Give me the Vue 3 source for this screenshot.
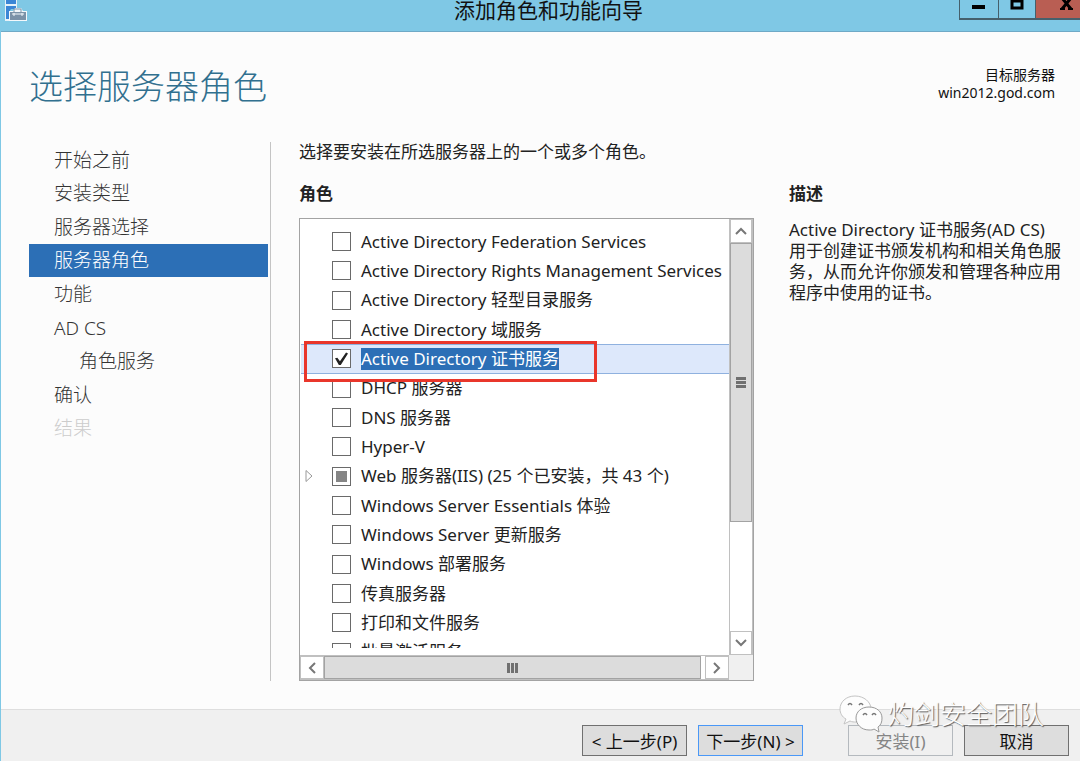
<template>
  <div class="window">
    <header class="titlebar">
      <svg class="app-icon" width="24" height="22" viewBox="0 0 24 22">
        <path d="M0 0h12v9H4v12H0z" fill="#e6f1f8" />
        <path d="M1 0h10v4H1zM1 6h10v3H6l-2 3v7H1z" fill="#3b86d6" />
        <path d="M4 11h4l2-3h6l2 3h4v10H4z" fill="#f4f8fb" />
        <path d="M5 12h16v8H5z" fill="#7b92a8" />
        <path d="M9 12V9h7v3" fill="none" stroke="#7b92a8" stroke-width="1" />
        <path d="M7 14h12M9 13v3M17 13v3" fill="none" stroke="#f4f8fb" stroke-width="1" />
      </svg>
      <h1 class="title">添加角色和功能向导</h1>
      <div class="window-controls">
        <button type="button" class="control" aria-label="最小化">
          <svg width="38" height="18" viewBox="0 0 38 18"><path d="M12 5h13v4H12z" fill="#000" /></svg>
        </button>
        <button type="button" class="control" aria-label="最大化">
          <svg width="36" height="18" viewBox="0 0 36 18"><path d="M13 1h10v7H13z" fill="none" stroke="#000" stroke-width="3" /></svg>
        </button>
        <button type="button" class="control close" aria-label="关闭">
          <svg width="44" height="18" viewBox="0 0 44 18">
            <path d="M26 -2L35 9M35 -2L26 9" stroke="#000" stroke-width="3" />
            <path d="M24 9h5M32 9h5" stroke="#000" stroke-width="2" />
          </svg>
        </button>
      </div>
    </header>

    <main class="wizard">
      <div class="page-header">
        <h2>选择服务器角色</h2>
        <p class="target">目标服务器<br />win2012.god.com</p>
      </div>

      <div class="columns">
        <nav class="steps">
          <div class="step-list">
            <a
              v-for="step in steps"
              :key="step.label"
              href="#"
              class="step"
              :class="{ current: step.current, child: step.child, disabled: step.disabled }"
              @click.prevent
            >{{ step.label }}</a>
          </div>
        </nav>

        <section class="roles">
          <p class="hint">选择要安装在所选服务器上的一个或多个角色。</p>
          <h3>角色</h3>
          <div class="list-box">
            <div class="viewport">
              <ul class="role-list">
                <li
                  v-for="(role, i) in roles"
                  :key="role.label"
                  class="role"
                  :class="{ selected: role.selected }"
                >
                  <button v-if="role.expandable" type="button" class="expander" aria-label="展开">
                    <svg width="9" height="14" viewBox="0 0 9 14"><path d="M1 1.5v11l6-5.500z" fill="#fff" stroke="#999" /></svg>
                  </button>
                  <input
                    :id="'role-' + i"
                    v-model="role.checked"
                    type="checkbox"
                    :indeterminate.prop="!!role.partial"
                  />
                  <label :for="'role-' + i">{{ role.label }}</label>
                  <span v-if="role.selected" class="marker"></span>
                </li>
              </ul>
            </div>

            <div class="scrollbar vertical">
              <button type="button" aria-label="向上滚动">
                <svg width="12" height="8" viewBox="0 0 12 8"><path d="M1 7l5-5 5 5" /></svg>
              </button>
              <div class="track"><div class="thumb"><i></i><i></i><i></i></div></div>
              <button type="button" aria-label="向下滚动">
                <svg width="12" height="8" viewBox="0 0 12 8"><path d="M1 1l5 5 5-5" /></svg>
              </button>
            </div>
            <div class="scrollbar horizontal">
              <button type="button" aria-label="向左滚动">
                <svg width="8" height="12" viewBox="0 0 8 12"><path d="M7 1L2 6l5 5" /></svg>
              </button>
              <div class="track"><div class="thumb"><i></i><i></i><i></i></div></div>
              <button type="button" aria-label="向右滚动">
                <svg width="8" height="12" viewBox="0 0 8 12"><path d="M1 1l5 5-5 5" /></svg>
              </button>
            </div>
            <div class="corner"></div>
          </div>
        </section>

        <aside class="description">
          <h3>描述</h3>
          <p>Active Directory 证书服务(AD CS) 用于创建证书颁发机构和相关角色服务，从而允许你颁发和管理各种应用程序中使用的证书。</p>
        </aside>
      </div>
    </main>

    <footer class="actions">
      <button type="button">&lt; 上一步(P)</button>
      <button type="button" class="primary">下一步(N) &gt;</button>
      <button type="button" class="install" disabled>安装(I)</button>
      <button type="button">取消</button>
    </footer>

    <div class="watermark">
      <svg width="44" height="38" viewBox="0 0 44 38">
        <g fill="#fdfdfd" stroke="#c4c4c4" stroke-width="1">
          <path d="M16 1C7 1 1 7 1 14c0 4 2 8 6 10l-2 5 6-3c2 1 4 1 6 1 9 0 15-6 15-13S25 1 16 1z" />
          <path d="M30 12c-8 0-13 5-13 11s5 12 13 12c2 0 4 0 5-1l5 3-1-5c3-2 4-5 4-9 0-6-5-11-13-11z" stroke="#999" />
        </g>
        <g fill="none" stroke="#777" stroke-width="1.500">
          <path d="M9 10q2-3 4 0M20 10q2-3 4 0M24 20q2-3 4 0M33 20q2-3 4 0" />
        </g>
      </svg>
      <span>灼剑安全团队</span>
    </div>
  </div>
</template>

<script setup>
import { ref } from 'vue';

const steps = [
  { label: '开始之前' },
  { label: '安装类型' },
  { label: '服务器选择' },
  { label: '服务器角色', current: true },
  { label: '功能' },
  { label: 'AD CS' },
  { label: '角色服务', child: true },
  { label: '确认' },
  { label: '结果', disabled: true },
];

const roles = ref([
  { label: 'Active Directory Federation Services' },
  { label: 'Active Directory Rights Management Services' },
  { label: 'Active Directory 轻型目录服务' },
  { label: 'Active Directory 域服务' },
  { label: 'Active Directory 证书服务', checked: true, selected: true },
  { label: 'DHCP 服务器' },
  { label: 'DNS 服务器' },
  { label: 'Hyper-V' },
  { label: 'Web 服务器(IIS) (25 个已安装，共 43 个)', partial: true, expandable: true },
  { label: 'Windows Server Essentials 体验' },
  { label: 'Windows Server 更新服务' },
  { label: 'Windows 部署服务' },
  { label: '传真服务器' },
  { label: '打印和文件服务' },
  { label: '批量激活服务' },
]);
</script>

<style>
body {
  margin: 0;
}
</style>

<style scoped>
* {
  box-sizing: border-box;
}
h1, h2, h3, p, ul {
  margin: 0;
  padding: 0;
}
button {
  font: inherit;
  padding: 0;
}
svg {
  display: block;
}
.window {
  position: relative;
  display: flex;
  flex-direction: column;
  height: 100vh;
  overflow: hidden;
  border-left: 1px solid #7fc8e5;
  background: #fcfcfc;
  color: #222;
  font-family: "Noto Sans", "Noto Sans CJK SC", sans-serif;
  font-size: 16px;
}

/* Title bar */
.titlebar {
  flex: none;
  display: grid;
  grid-template-columns: 1fr auto 1fr;
  align-items: start;
  height: 32px;
  padding-left: 4px;
  background: #7fc8e5;
  border-bottom: 1px solid #6fa9c6;
}
.title {
  padding-left: 12px;
  color: #111;
  font-size: 21px;
  font-weight: 400;
  line-height: 20px;
}
.window-controls {
  display: flex;
  justify-content: flex-end;
}
.control {
  height: 20px;
  overflow: hidden;
  border: solid #45606c;
  border-width: 0 0 2px 1px;
  background: #7fc8e5;
}
.control.close {
  background: #b95e53;
}

/* Page */
.wizard {
  flex: 1;
  min-height: 0;
  display: flex;
  flex-direction: column;
  padding: 0 19px 28px 28px;
}
.page-header {
  flex: none;
  display: flex;
  justify-content: space-between;
  height: 110px;
  padding: 34px 6px 0 0;
}
.page-header h2 {
  color: #31708f;
  font-size: 34px;
  font-weight: 300;
  line-height: 40px;
}
.target {
  color: #111;
  font-size: 14px;
  line-height: 18px;
  text-align: right;
}
.columns {
  flex: 1;
  min-height: 0;
  display: flex;
}

/* Steps */
.steps {
  flex: none;
  width: 242px;
  padding: 1px 2px 0 0;
  border-right: 1px solid #c4c4c4;
}
.step-list {
  display: grid;
  grid-auto-rows: 1fr;
  height: 302px;
}
.step {
  display: flex;
  align-items: center;
  padding-left: 25px;
  color: #333;
  font-size: 19px;
  font-weight: 300;
  line-height: 32px;
  text-decoration: none;
}
.step.current {
  background: #2c6fb6;
  color: #fff;
}
.step.child {
  padding-left: 50px;
}
.step.disabled {
  color: #ccc;
}

/* Role list */
.roles {
  flex: 1;
  min-width: 0;
  display: flex;
  flex-direction: column;
  margin-left: 28px;
}
.hint {
  font-size: 17px;
  line-height: 20px;
}
h3 {
  font-size: 17px;
  font-weight: 700;
  line-height: 20px;
}
.roles h3 {
  margin: 22px 0 14px;
}
.list-box {
  flex: 1;
  min-height: 0;
  display: grid;
  grid-template-columns: minmax(0, 1fr) 24px;
  grid-template-rows: minmax(0, 1fr) 25px;
  border: 1px solid #a3a3a3;
  background: #fff;
}
.viewport {
  overflow: hidden;
  margin-bottom: 7px;
  padding: 8px 0 0 1px;
}
.role-list {
  display: grid;
  grid-auto-rows: 1fr;
  height: 440px;
  list-style: none;
}
.role {
  position: relative;
  display: flex;
  align-items: center;
  gap: 10px;
  padding-left: 31px;
  font-size: 17px;
  white-space: nowrap;
}
.role.selected {
  border: solid #8fb1df;
  border-width: 1px 0;
  background: #dde8fb;
}
.role label {
  line-height: 22px;
}
.role.selected label {
  background: #2c6fb6;
  color: #fff;
}
.role input {
  appearance: none;
  flex: none;
  display: grid;
  place-items: center;
  width: 19px;
  height: 19px;
  margin: 0;
  border: 1px solid #6a6a6a;
  background: #fff;
}
.role input:checked::before {
  content: "";
  width: 13px;
  height: 13px;
  background: #222;
  clip-path: polygon(0 45%, 18% 40%, 38% 68%, 85% 0, 100% 8%, 42% 100%, 32% 100%);
}
.role input:indeterminate::before {
  content: "";
  width: 11px;
  height: 11px;
  background: #858585;
}
.expander {
  position: absolute;
  left: 4px;
  border: 0;
  background: none;
}
.marker {
  position: absolute;
  z-index: 1;
  top: -4px;
  left: 3px;
  width: 293px;
  height: 41px;
  border: 3px solid #e9362b;
  pointer-events: none;
}

/* Scrollbars */
.scrollbar {
  display: flex;
  background: #fff;
}
.scrollbar.vertical {
  flex-direction: column;
  border-left: 1px solid #c0c0c0;
  border-right: 1px solid #c0c0c0;
}
.scrollbar.horizontal {
  border-top: 1px solid #c0c0c0;
  border-bottom: 1px solid #c0c0c0;
}
.scrollbar button {
  flex: none;
  display: grid;
  place-items: center;
  width: 24px;
  height: 24px;
  border: 1px solid #c0c0c0;
  background: #fff;
}
.vertical button {
  width: 100%;
}
.horizontal button {
  height: 100%;
}
.scrollbar path {
  fill: none;
  stroke: #777;
  stroke-width: 2;
}
.track {
  flex: 1;
  display: flex;
}
.vertical .track {
  flex-direction: column;
}
.thumb {
  display: flex;
  align-items: center;
  justify-content: center;
  gap: 1px;
  border: 1px solid #a3a3a3;
  background: #dcdcdc;
}
.vertical .thumb {
  flex-direction: column;
  height: 72%;
}
.horizontal .thumb {
  width: 99%;
}
.thumb i {
  background: #707070;
}
.vertical .thumb i {
  width: 10px;
  height: 3px;
}
.horizontal .thumb i {
  width: 3px;
  height: 10px;
}
.corner {
  background: #f0f0f0;
}

/* Description */
.description {
  flex: none;
  width: 272px;
  margin-left: 35px;
}
.description h3 {
  margin: 42px 0 15px;
}
.description p {
  font-size: 17px;
  line-height: 21px;
}

/* Footer */
.actions {
  flex: none;
  display: flex;
  justify-content: flex-end;
  gap: 11px;
  padding: 15px 11px 5px;
  border-top: 1px solid #dedede;
  background: #f0f0f0;
}
.actions button {
  width: 105px;
  height: 31px;
  border: 1px solid #707070;
  background: #dddddd;
  color: #111;
  font-size: 17px;
  white-space: nowrap;
}
.actions .primary {
  border-color: #4a98f7;
}
.actions .install {
  margin-left: 34px;
  border-color: #b4b9be;
  background: #f0f0f0;
  color: #858585;
}

/* Watermark */
.watermark {
  position: absolute;
  right: 36px;
  bottom: 28px;
  display: flex;
  align-items: center;
  gap: 5px;
  color: #fff;
  font-size: 26px;
  font-weight: 300;
  line-height: 38px;
  text-shadow: 1px 1px 1px #555;
  pointer-events: none;
}
</style>
